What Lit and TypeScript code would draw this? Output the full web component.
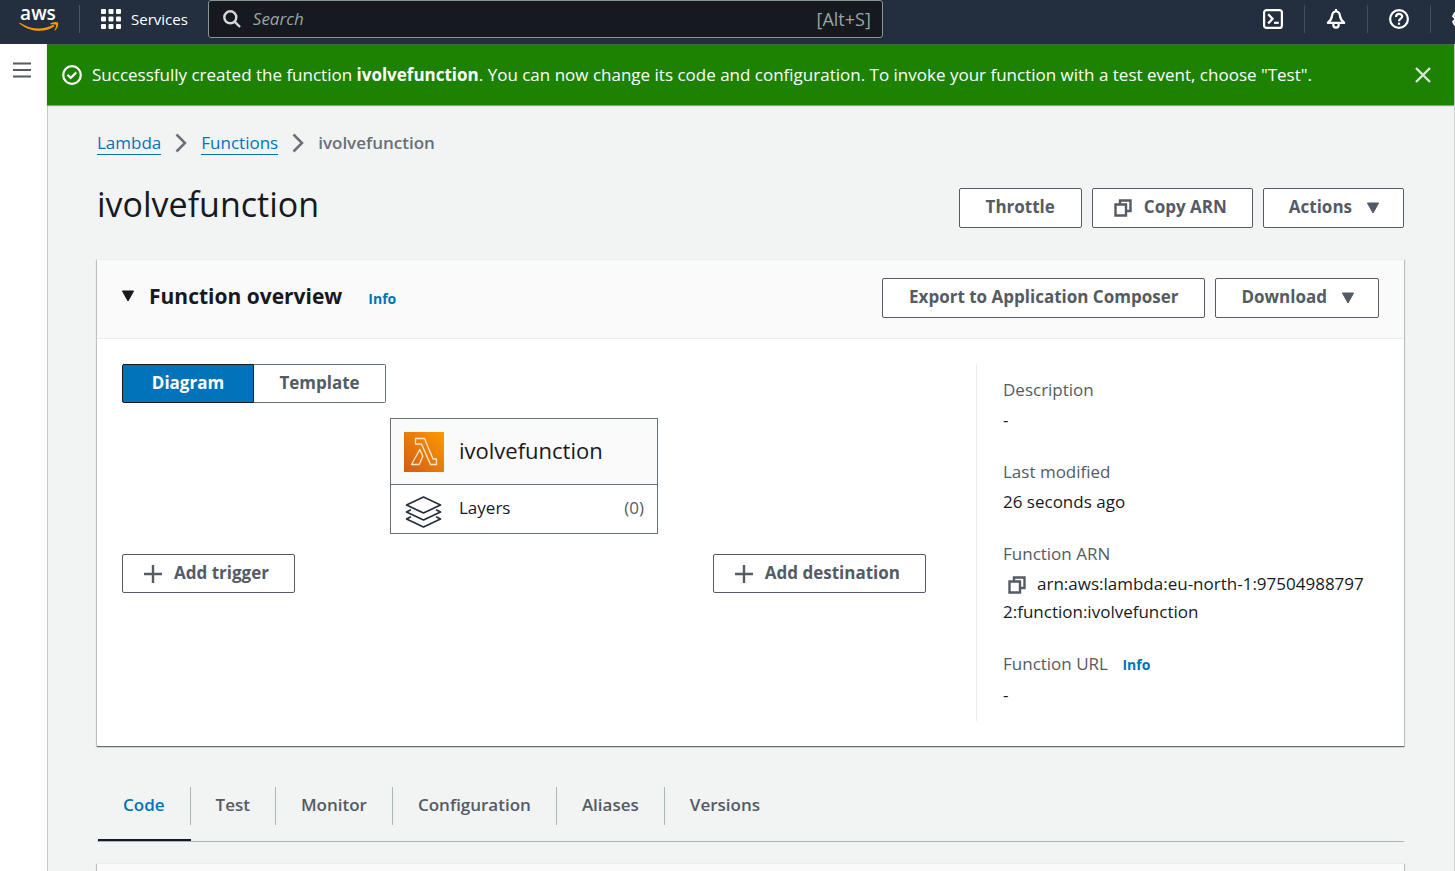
import { LitElement, html, css, svg, nothing } from "lit";
import { customElement, state } from "lit/decorators.js";

const copyIcon = svg`<path d="M6 5V1.500h10.500V12H13M1.500 5.500H12V16.500H1.500z" fill="none" stroke="currentColor" stroke-width="2.400"/>`;
const copy = html`<svg class="copy" width="18" height="18" viewBox="0 0 18 18" aria-hidden="true">${copyIcon}</svg>`;
const caret = html`<svg width="14" height="12" viewBox="0 0 14 12" aria-hidden="true"><path d="M1.4 1h11.2L7 11z" fill="currentColor" stroke="currentColor" stroke-linejoin="round"/></svg>`;
const plus = html`<svg width="18" height="18" viewBox="0 0 18 18" aria-hidden="true"><path d="M9 0v18M0 9h18" stroke="currentColor" stroke-width="2.4"/></svg>`;

@customElement("top-nav")
export class TopNav extends LitElement {
  static styles = css`
    :host { display: block; background: #232f3e; color: #fff; overflow: hidden; }
    header { display: flex; align-items: center; height: 38px; padding-bottom: 6px; }
    button, a { border: 0; background: none; color: inherit; font: inherit; padding: 0; cursor: pointer; }
    svg { display: block; }
    .logo { padding-left: 18px; flex: none; text-decoration: none; }
    .logo svg { overflow: visible; }
    .word { font-size: 19px; font-weight: 600; }
    .divider { width: 1px; height: 28px; margin: 0 21px 0 20px; background: #4b5563; flex: none; }
    .services { display: flex; align-items: center; gap: 10px; font-size: 15px; font-weight: 500; }
    .search { display: flex; align-items: center; gap: 12px; flex: 0 1 675px; min-width: 0; height: 38px; box-sizing: border-box;
      margin-left: 20px; padding: 0 11px 0 14px; border: 1px solid #879596; border-radius: 3px; background: #16191f; color: #95a5a6; }
    .search svg { color: #d5dbdb; flex: none; }
    .search span { font-size: 18px; }
    input { flex: 1; min-width: 0; border: 0; outline: 0; padding: 0; background: none; color: #fff; font: inherit; }
    input::placeholder { color: #95a5a6; font-style: italic; opacity: 1; }
    .tools { display: flex; margin: 0 -39px 0 auto; padding-left: 20px; }
    .tools button { width: 63px; height: 28px; display: grid; place-items: center; border-right: 1px solid #414d5c; flex: none; }
  `;
  render() {
    return html`<header>
      <a class="logo" href="#" aria-label="aws">
        <svg width="41" height="38" viewBox="0 0 41 38">
          <text class="word" x="20" y="20" text-anchor="middle" fill="#fff">aws</text>
          <path d="M1.4 23.500C12 32.500 27 33 36.500 26.200l-1.100-1.400C26 30 13 30.200 2 22.700q-1-.4-.6.8z" fill="#f90"/>
          <path d="M32.300 23.600q4-2.400 7.800-1 .6 4.400-3 8-.7.2-.5-.5 1.500-3 1.700-5.400-2.500-.8-5.800-.4-.8-.2-.2-.7z" fill="#f90"/>
        </svg>
      </a>
      <span class="divider"></span>
      <button class="services">
        <svg width="20" height="20" viewBox="0 0 20 20" fill="currentColor" aria-hidden="true">
          ${[0, 7.5, 15].map((y) => [0, 7.5, 15].map((x) => svg`<rect x=${x} y=${y} width="5" height="5" rx="1"/>`))}
        </svg>Services
      </button>
      <label class="search">
        <svg width="18" height="18" viewBox="0 0 18 18" fill="none" stroke="currentColor" stroke-width="2.400" aria-hidden="true"><circle cx="7.300" cy="7.300" r="6"/><path d="M11.600 11.600l5.400 5.400"/></svg>
        <input type="search" placeholder="Search" aria-label="Search" />
        <span>[Alt+S]</span>
      </label>
      <div class="tools">
        <button aria-label="CloudShell"><svg width="20" height="20" viewBox="0 0 20 20" fill="none" stroke="currentColor" stroke-width="2.200"><rect x="1.100" y="1.100" width="17.800" height="17.800" rx="2.500"/><path d="M5.200 5.200l4.300 4.600-4.300 4.700" stroke-width="2.300"/><path d="M11 13.800h4.800" stroke-width="2.200"/></svg></button>
        <button aria-label="Notifications"><svg width="20" height="20" viewBox="0 0 20 20" fill="none" stroke="currentColor" stroke-width="2.200"><path d="M10 2.500C7.200 2.500 6.300 4.500 6 7c-.4 3.200-1.800 4.900-4.200 6.900h16.400C15.800 11.900 14.400 10.200 14 7c-.3-2.500-1.200-4.500-4-4.500z" stroke-linejoin="round"/><path d="M10 0v3"/><path d="M7.300 14.500v1.300a2.700 2.900 0 0 0 5.400 0v-1.300"/></svg></button>
        <button aria-label="Help"><svg width="20" height="20" viewBox="0 0 20 20" fill="none" stroke="currentColor" stroke-width="2.200"><circle cx="10" cy="10" r="8.900"/><path d="M7 8c0-4 6.200-4 6.200-.5 0 2.200-3.200 2.300-3.200 4.800"/><path d="M10 13.600v2.200"/></svg></button>
        <button aria-label="Settings"><svg width="20" height="20" viewBox="0 0 20 20" fill="none" stroke="currentColor" stroke-width="2" stroke-linejoin="round"><path d="M8 1h4l.6 2.600 1.700 1 2.600-.8 2 3.400-2 1.900v1.800l2 1.900-2 3.400-2.600-.8-1.700 1L12 19H8l-.6-2.600-1.700-1-2.600.8-2-3.400 2-1.900V9.100l-2-1.900 2-3.400 2.600.8 1.700-1z"/><circle cx="10" cy="10" r="3"/></svg></button>
      </div>
    </header>`;
  }
}

@customElement("app-root")
export class AppRoot extends LitElement {
  static styles = css`
    :host { display: flex; flex-direction: column; min-height: 100vh; font: 400 17px/28px "Open Sans", "Noto Sans", sans-serif; color: #16191f; background: #fff; }
    * { box-sizing: border-box; }
    svg { display: block; flex: none; }
    h1, h2, dl, dd, ol { margin: 0; padding: 0; }
    a { color: #0073bb; text-decoration: none; }
    button { font: inherit; color: inherit; cursor: pointer; }
    .icon-button { border: 0; background: none; padding: 0; display: block; }
    .shell { flex: 1; display: flex; }
    .rail { width: 47px; flex: none; padding: 18px 0 0 13px; color: #545b64; }
    main { flex: 1; min-width: 0; display: flex; flex-direction: column; border-right: 1px solid #ccd1d1; background: #f2f3f3; }
    .flash { display: flex; align-items: center; gap: 10px; min-height: 61px; padding: 0 23px 0 15px; background: #1d8102; color: #fff; box-shadow: inset 0 1px #3c6e3a, 0 1px 1px #8aa583; z-index: 1; }
    .flash p { margin: 0; flex: 1; }
    .flash b { font-weight: 700; }
    .content { flex: 1; display: flex; flex-direction: column; padding: 24px 50px 0; box-shadow: inset 1px 0 #c3caca; }
    .crumbs { display: flex; align-items: center; list-style: none; gap: 14px; }
    .crumbs a { display: block; line-height: 22px; border-bottom: 1px solid #0073bb; }
    .crumbs li { display: flex; align-items: center; gap: 14px; color: #687078; }
    .crumbs b { font-weight: 600; }
    .title-row { display: flex; justify-content: space-between; margin: 27px 0 31px; gap: 20px; }
    h1 { font-size: 34px; line-height: 40px; font-weight: 400; }
    .actions { display: flex; gap: 10px; }
    .title-row .actions { padding-top: 4px; }
    .btn { display: flex; align-items: center; gap: 12px; height: 40px; padding: 0 26px 2px; border: 1px solid #545b64; border-radius: 2px; background: #fff; color: #545b64; font-weight: 700; white-space: nowrap; }
    .btn.lead { padding: 0 25px 2px 21px; }
    .btn.caret { padding: 0 23px 2px 25px; gap: 14px; }
    .btn svg { margin-top: 2px; }
    .panel { background: #fff; border-top: 1px solid #eaeded; box-shadow: 0 1px 1px #5f6b7a, 1px 1px 1px #ccd1d1, -1px 1px 1px #ccd1d1; }
    .panel-head { display: flex; justify-content: space-between; gap: 20px; padding: 18px 25px 20px 24px; background: #fafafa; border-bottom: 1px solid #eaeded; }
    .heading { display: flex; align-items: center; gap: 14px; height: 36px; }
    h2 { font-size: 21px; font-weight: 700; }
    .heading .info { margin: 5px 0 0 12px; }
    .info { font-size: 14px; font-weight: 700; }
    .body { display: flex; padding: 25px; }
    .diagram { flex: 1; min-width: 0; padding-right: 50px; }
    .segments { display: flex; }
    .segments button { min-width: 132px; height: 39px; padding: 0 24px 2px; border: 1px solid #687078; border-left: 0; border-radius: 0 2px 2px 0; background: #fff; color: #545b64; font-weight: 700; }
    .segments button.on { border: 1px solid #16191f; border-radius: 2px 0 0 2px; background: #0073bb; color: #fff; }
    .node { width: 268px; margin: 15px auto 20px; border: 1px solid #687078; }
    .node > div { display: flex; align-items: center; }
    .node-head { height: 65px; gap: 15px; padding: 0 13px; background: #fafafa; font-size: 22px; }
    .node-head span { padding-bottom: 4px; }
    .layers { height: 49px; gap: 15px; padding: 0 13px 2px; border-top: 1px solid #687078; }
    .layers svg { margin-top: 7px; }
    .layers span { margin-left: auto; color: #545b64; }
    .ends { display: flex; justify-content: space-between; }
    .ends .btn { height: 39px; }
    dl { flex: none; width: 403px; padding: 12px 0 12px 26px; border-left: 1px solid #eaeded; }
    dt { color: #545b64; margin-bottom: 2px; }
    dt .info { margin-left: 10px; }
    dd + dt { margin-top: 24px; }
    .arn { padding-right: 8px; word-break: break-all; }
    .arn button { display: inline-block; vertical-align: -4px; margin: 0 11px 0 5px; color: #545b64; }
    .tabs { display: flex; margin: 41px 0 21px; padding-left: 1px; border-bottom: 1px solid #aab7b8; }
    .tabs button { border: 0; border-bottom: 2px solid transparent; background: none; padding: 0 0 14px; color: #545b64; font-weight: 600; }
    .tabs span { display: block; padding: 4px 25px 6px; border-right: 1px solid #aab7b8; }
    .tabs button:last-child span { border-color: transparent; }
    .tabs button.on { color: #0073bb; border-color: #16191f; }
    .next { flex: 1; background: #fafafa; }
  `;

  @state() tab = "Code";
  @state() view = "Diagram";

  render() {
    const chevron = html`<svg width="12" height="20" viewBox="0 0 12 20" aria-hidden="true"><path d="M1.500 1.500l8.500 8.500-8.500 8.500" fill="none" stroke="#687078" stroke-width="2.500"/></svg>`;
    return html`
      <top-nav></top-nav>
      <div class="shell">
        <aside class="rail">
          <button class="icon-button" aria-label="Open navigation"><svg width="18" height="16" viewBox="0 0 18 16"><path d="M0 1.500h18M0 8h18M0 14.500h18" stroke="currentColor" stroke-width="2"/></svg></button>
        </aside>
        <main>
          <div class="flash" role="status">
            <svg width="20" height="20" viewBox="0 0 20 20" fill="none" stroke="#fff" stroke-width="2.200"><circle cx="10" cy="10" r="8.800"/><path d="M5.500 9.800l3.200 3.200 5.600-5.600"/></svg>
            <p>Successfully created the function <b>ivolvefunction</b>. You can now change its code and configuration. To invoke your function with a test event, choose "Test".</p>
            <button class="icon-button" aria-label="Dismiss"><svg width="16" height="16" viewBox="0 0 16 16"><path d="M1 1l14 14M15 1L1 15" stroke="#d9e8d5" stroke-width="2.400"/></svg></button>
          </div>
          <div class="content">
            <nav aria-label="Breadcrumbs">
              <ol class="crumbs">
                <li><a href="#">Lambda</a>${chevron}</li>
                <li><a href="#">Functions</a>${chevron}</li>
                <li><b>ivolvefunction</b></li>
              </ol>
            </nav>
            <div class="title-row">
              <h1>ivolvefunction</h1>
              <div class="actions">
                <button class="btn">Throttle</button>
                <button class="btn lead">${copy}Copy ARN</button>
                <button class="btn caret">Actions${caret}</button>
              </div>
            </div>
            <section class="panel">
              <div class="panel-head">
                <div class="heading">${caret}<h2>Function overview</h2><a class="info" href="#">Info</a></div>
                <div class="actions">
                  <button class="btn">Export to Application Composer</button>
                  <button class="btn caret">Download${caret}</button>
                </div>
              </div>
              <div class="body">
                <div class="diagram">
                  <div class="segments">
                    ${["Diagram", "Template"].map((v) => html`<button class=${v === this.view ? "on" : nothing} @click=${() => (this.view = v)}>${v}</button>`)}
                  </div>
                  <div class="node">
                    <div class="node-head">
                      <svg width="40" height="40" viewBox="0 0 40 40" aria-hidden="true">
                        <defs><linearGradient id="g" x1="0" y1="1" x2="1" y2="0"><stop offset="0" stop-color="#d05c17"/><stop offset="1" stop-color="#f90"/></linearGradient></defs>
                        <rect width="40" height="40" fill="url(#g)"/>
                        <path d="M11.500 6.500h9l8.500 20.500h3.500v5.500h-6L17.500 12h-6zM15.800 17.500l3 6.800L15.200 32.500H7.500z" fill="none" stroke="#ffe9cf" stroke-width="1.300" stroke-linejoin="round"/>
                      </svg><span>ivolvefunction</span>
                    </div>
                    <div class="layers">
                      <svg width="40" height="34" viewBox="0 0 40 34" fill="none" stroke="#232f3e" stroke-width="1.700" stroke-linejoin="round" aria-hidden="true">
                        <path d="M19.500 2L36.500 10 19.500 18 2.500 10z"/><path d="M7 14.800L2.500 17l17 8 17-8L32 14.800"/><path d="M7 21.800L2.500 24l17 8 17-8L32 21.800"/>
                      </svg>Layers<span>(0)</span>
                    </div>
                  </div>
                  <div class="ends">
                    <button class="btn lead">${plus}Add trigger</button>
                    <button class="btn lead">${plus}Add destination</button>
                  </div>
                </div>
                <dl>
                  <dt>Description</dt><dd>-</dd>
                  <dt>Last modified</dt><dd>26 seconds ago</dd>
                  <dt>Function ARN</dt><dd class="arn"><button class="icon-button" aria-label="Copy">${copy}</button>arn:aws:lambda:eu-north-1:975049887972:function:ivolvefunction</dd>
                  <dt>Function URL <a class="info" href="#">Info</a></dt><dd>-</dd>
                </dl>
              </div>
            </section>
            <div class="tabs" role="tablist">
              ${["Code", "Test", "Monitor", "Configuration", "Aliases", "Versions"].map((t) => html`<button role="tab" aria-selected=${t === this.tab} class=${t === this.tab ? "on" : nothing} @click=${() => (this.tab = t)}><span>${t}</span></button>`)}
            </div>
            <section class="panel next"></section>
          </div>
        </main>
      </div>`;
  }
}
